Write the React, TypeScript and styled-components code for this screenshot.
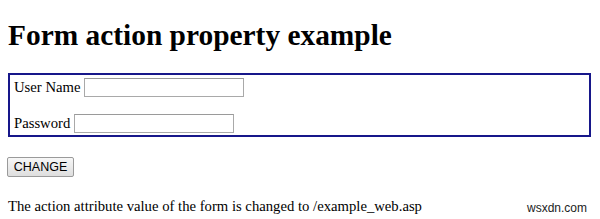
import React from "react";
import styled, { createGlobalStyle } from "styled-components";

const Global = createGlobalStyle`
  html, body { margin: 0; padding: 0; background: #ffffff; }
  body { font-family: "Liberation Serif", "Times New Roman", serif; color: #000; }
`;

const Page = styled.div`
  position: relative;
  width: 600px;
  height: 219px;
  padding: 0 9px 0 8px;
  box-sizing: border-box;
  overflow: hidden;
  display: flex;
  flex-direction: column;
  align-items: flex-start;
`;

const Heading = styled.h1`
  margin: 18px 0 21px 0;
  font-size: 29.4px;
  line-height: 34px;
  font-weight: bold;
`;

const Form = styled.form`
  align-self: stretch;
  border: 2px solid #17178a;
  padding: 3px 4px 2px 4px;
  display: flex;
  flex-direction: column;
  gap: 17px;
`;

const Row = styled.div`
  display: flex;
  align-items: center;
  height: 19px;
`;

const Label = styled.label`
  font-size: 14.7px;
  line-height: 17px;
  margin-right: 4px;
`;

const Input = styled.input`
  box-sizing: border-box;
  width: 160px;
  height: 19px;
  margin: 0;
  padding: 0 2px;
  border: 1px solid #a9a9a9;
  border-top-color: #9a9a9a;
  background: #fff;
  outline: none;
`;

const Button = styled.button`
  margin: 20px 0 0 -1px;
  box-sizing: border-box;
  width: 67px;
  height: 20px;
  padding: 0;
  font-family: "Liberation Sans", Arial, sans-serif;
  font-size: 12.5px;
  color: #000;
  background: linear-gradient(#f7f7f7, #dedede);
  border: 1px solid #9a9a9a;
  border-radius: 2px;
`;

const Message = styled.p`
  margin: 21px 0 0 0;
  font-size: 14.7px;
  line-height: 17px;
`;

const Watermark = styled.span`
  position: absolute;
  left: 527px;
  top: 201px;
  font-family: "Liberation Sans", Arial, sans-serif;
  font-size: 12px;
  line-height: 14px;
  color: #222;
`;

export default function App() {
  return (
    <>
      <Global />
      <Page>
        <Heading>Form action property example</Heading>
        <Form action="/sample_page.php">
          <Row>
            <Label>User Name</Label>
            <Input type="text" />
          </Row>
          <Row>
            <Label>Password</Label>
            <Input type="password" />
          </Row>
        </Form>
        <Button type="button">CHANGE</Button>
        <Message>The action attribute value of the form is changed to /example_web.asp</Message>
        <Watermark>wsxdn.com</Watermark>
      </Page>
    </>
  );
}
